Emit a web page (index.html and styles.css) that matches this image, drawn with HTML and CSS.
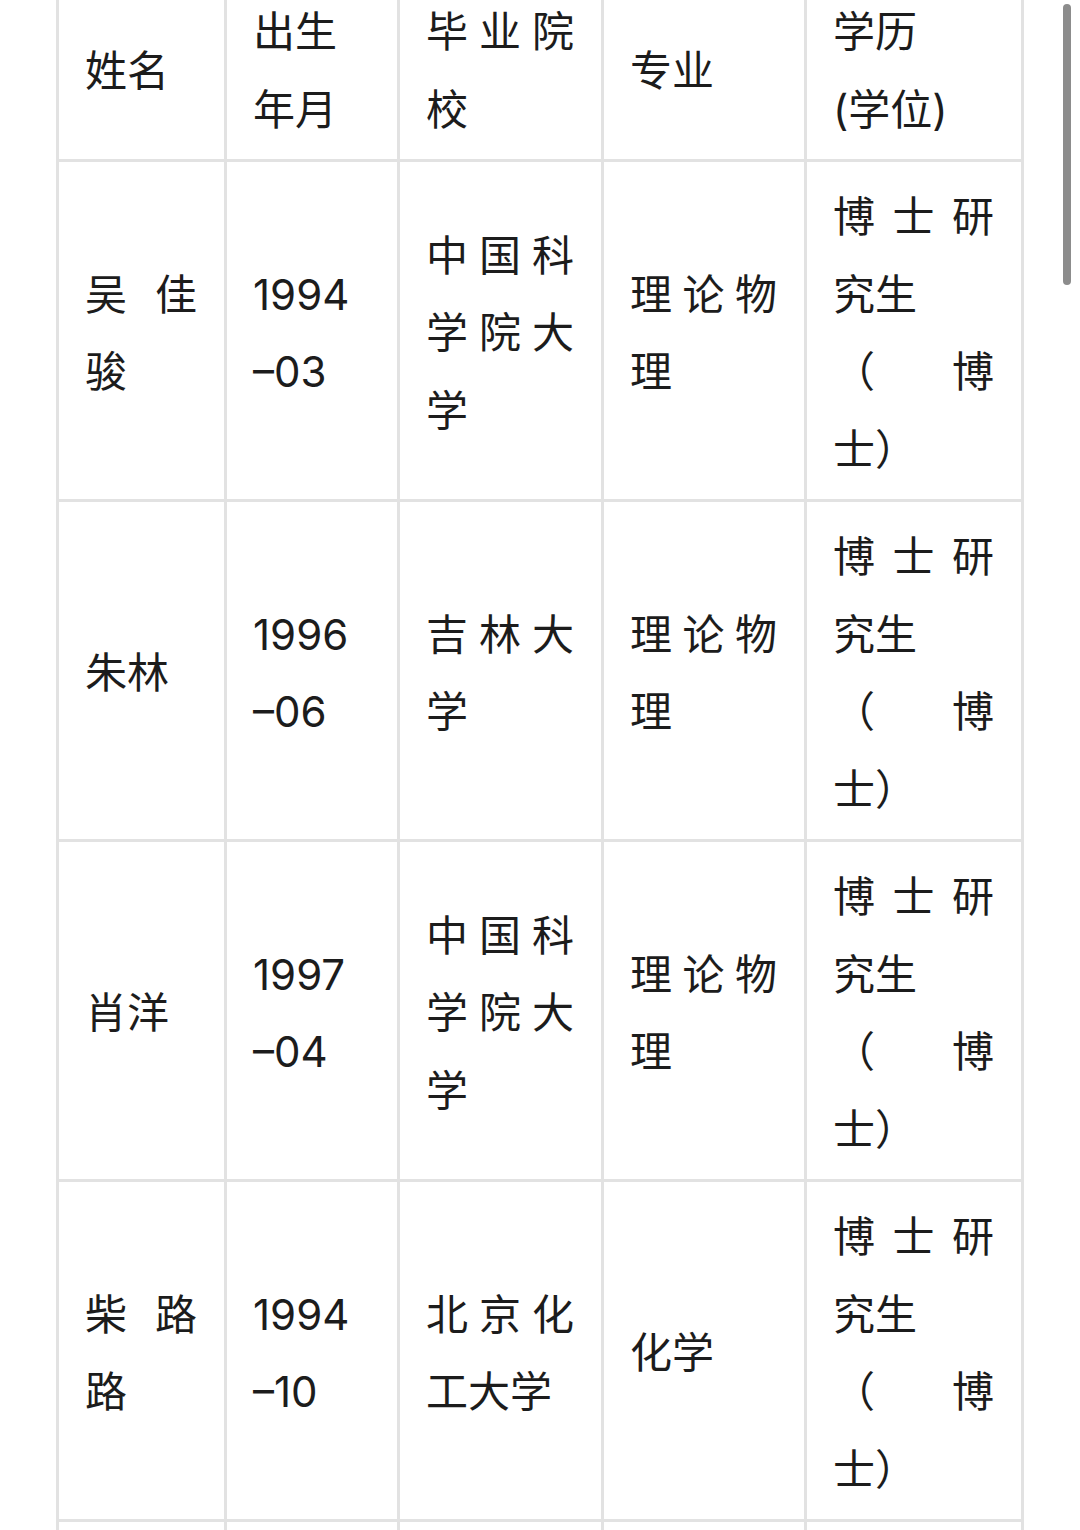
FILE: index.html
```html
<!DOCTYPE html>
<html lang="zh-CN">
<head>
<meta charset="utf-8">
<title>名单</title>
<link rel="stylesheet" href="styles.css">
</head>
<body>
<div class="page">
  <table class="roster">
    <colgroup>
      <col class="c-name">
      <col class="c-birth">
      <col class="c-school">
      <col class="c-major">
      <col class="c-degree">
    </colgroup>
    <thead>
      <tr>
        <th>姓名</th>
        <th>出生年月</th>
        <th class="just">毕业院校</th>
        <th>专业</th>
        <th>学历<br>(学位)</th>
      </tr>
    </thead>
    <tbody>
      <tr>
        <td>吴佳骏</td>
        <td>1994<br>–03</td>
        <td>中国科学院大学</td>
        <td>理论物理</td>
        <td>博士研究生<br>（博士）</td>
      </tr>
      <tr>
        <td>朱林</td>
        <td>1996<br>–06</td>
        <td>吉林大学</td>
        <td>理论物理</td>
        <td>博士研究生<br>（博士）</td>
      </tr>
      <tr>
        <td>肖洋</td>
        <td>1997<br>–04</td>
        <td>中国科学院大学</td>
        <td>理论物理</td>
        <td>博士研究生<br>（博士）</td>
      </tr>
      <tr>
        <td>柴路路</td>
        <td>1994<br>–10</td>
        <td>北京化工大学</td>
        <td>化学</td>
        <td>博士研究生<br>（博士）</td>
      </tr>
      <tr class="next">
        <td></td>
        <td></td>
        <td></td>
        <td></td>
        <td></td>
      </tr>
    </tbody>
  </table>
</div>
<div class="scrollbar"></div>
</body>
</html>
```
FILE: styles.css
```css
html, body {
  margin: 0;
  padding: 0;
  background: #ffffff;
  overflow: hidden;
}

body {
  font-family: Inter, "Noto Sans CJK SC", "Noto Sans", sans-serif;
  color: #1c1c1c;
  font-size: 42px;
  text-spacing-trim: space-all;
}

.page {
  padding-left: 56px;
  margin-top: -26px;
}

.roster {
  border-collapse: collapse;
  table-layout: fixed;
  width: 968px;
}

.c-name { width: 168px; }
.c-birth { width: 173px; }
.c-school { width: 204px; }
.c-major { width: 203px; }
.c-degree { width: 217px; }

.roster th,
.roster td {
  border: 3px solid #e2e2e2;
  padding: 16px 27px 11px 26px;
  line-height: 77.5px;
  vertical-align: middle;
  font-weight: normal;
  word-break: break-all;
  text-spacing-trim: space-all;
}

.roster th {
  text-align: left;
}

.roster th.just {
  text-align: justify;
}

.roster td {
  text-align: justify;
}

.roster tr.next td {
  height: 300px;
}

.scrollbar {
  position: fixed;
  top: 4px;
  right: 9px;
  width: 8px;
  height: 281px;
  border-radius: 4px;
  background: #8c8c8c;
}
```
